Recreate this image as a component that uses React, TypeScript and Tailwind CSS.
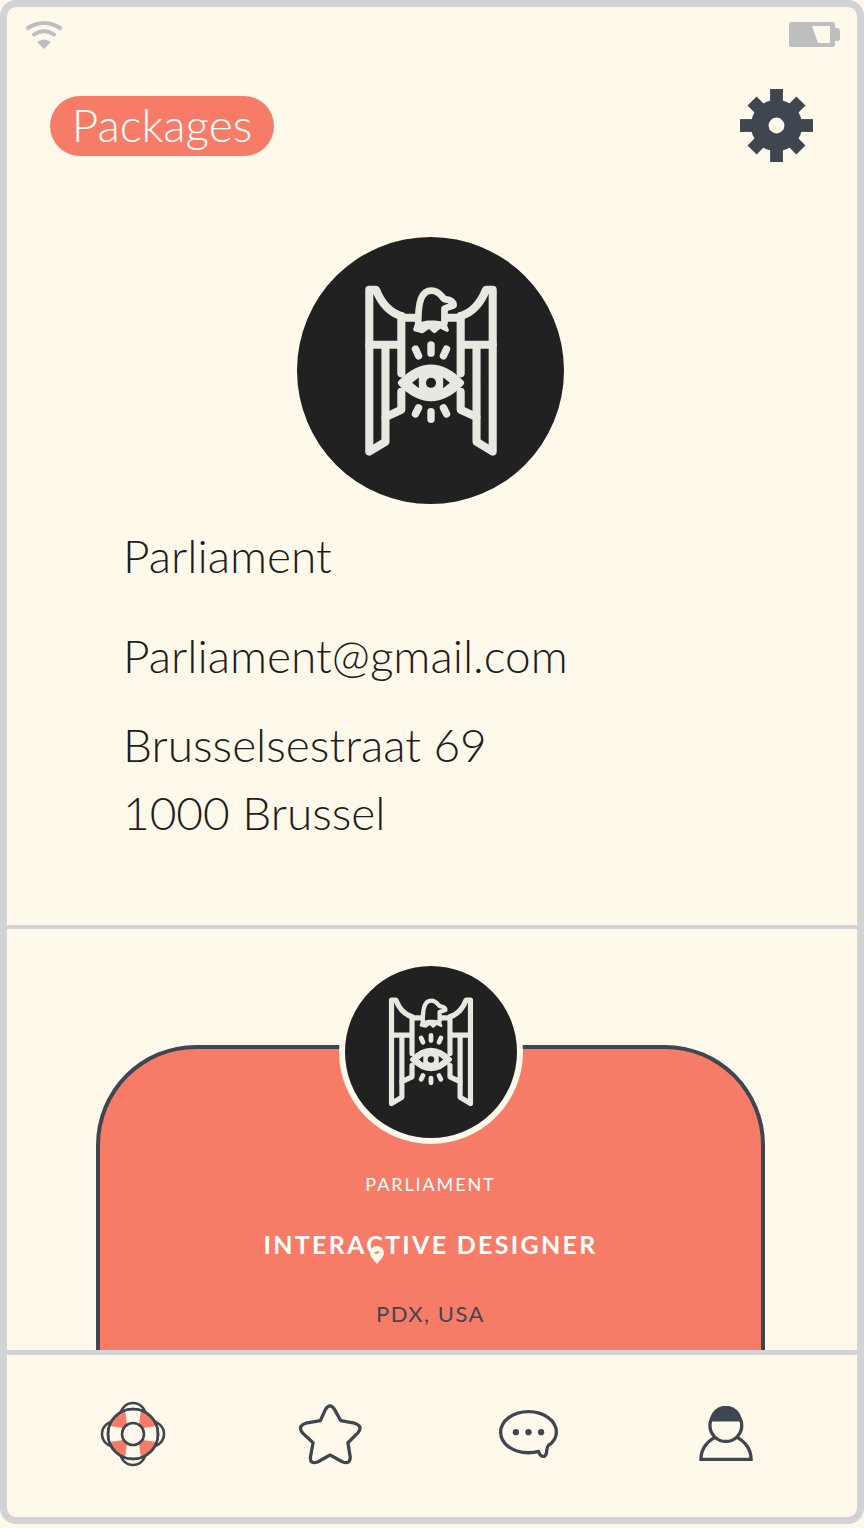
import React from "react"

const thin = { fontFamily: "Lato, sans-serif" }

function Emblem({ className }: { className: string }) {
  return (
    <svg viewBox="80 48 396 510" className={className} fill="none" stroke="#e8e8e0" strokeWidth="24" strokeLinejoin="round" strokeLinecap="round">
      {/* wings */}
      <path d="M190 140 Q140 125 115 62 H95 V542 L143 513 V440 L190 418 V365" />
      <path d="M366 140 Q416 125 441 62 H461 V542 L413 513 V440 L366 418 V365" />
      <path d="M190 140 V310 M366 140 V310 M95 225 H190 M366 225 H461 M143 225 V440 M413 225 V440 M190 145 H232 M322 145 H366" />
      {/* head */}
      <path d="M240 160 C240 95 250 65 280 65 C300 65 308 80 318 90 C335 92 345 98 345 108 L318 118 V160" strokeWidth="20" />
      <path d="M230 180 L236 162 H252 L268 158 L288 158 L318 162 L326 182 L305 172 L288 186 L272 172 L252 186 Z" fill="#e8e8e0" strokeWidth="10" />
      {/* rays */}
      <path d="M278 226 V250 M232 238 L241 258 M324 238 L315 258 M278 424 V446 M241 412 L232 430 M315 412 L324 430" strokeWidth="22" />
      {/* eye */}
      <path d="M190 338 Q278 250 366 338 Q278 426 190 338 Z" fill="#e8e8e0" strokeWidth="20" />
      <circle cx="278" cy="338" r="15" fill="#212121" stroke="none" />
      <path d="M242 322 L222 338 L242 354 Z M314 322 L334 338 L314 354 Z" fill="#212121" stroke="none" />
    </svg>
  )
}

function Wifi() {
  return (
    <svg viewBox="0 0 38 30" className="w-[38px] h-[30px]" fill="none" stroke="#bcbec0" strokeWidth="4">
      <path d="M1.5 9 Q19 -3 36.5 9" />
      <path d="M7.5 15.5 Q19 7 30.5 15.5" />
      <path d="M19 29 L12 22 Q19 17 26 22 Z" fill="#bcbec0" stroke="none" />
    </svg>
  )
}

function Battery() {
  return (
    <svg viewBox="0 0 51 25" className="w-[51px] h-[25px]">
      <rect x="0" y="0" width="46" height="25" rx="2" fill="#bcbec0" />
      <path d="M46 6 H48 Q51 6 51 9 V16 Q51 19 48 19 H46 Z" fill="#bcbec0" />
      <path d="M23 4 H41 V21 H29 Z" fill="#fff9ec" />
    </svg>
  )
}

function Gear() {
  return (
    <svg viewBox="-37 -37 74 74" className="w-[73px] h-[73px]">
      <circle r="26" fill="#3e4750" />
      {[0, 45, 90, 135, 180, 225, 270, 315].map((a) => (
        <rect key={a} x="-6.5" y={a % 90 === 0 ? -37 : -35} width="13" height="18" fill="#3e4750" transform={`rotate(${a})`} />
      ))}
      <circle r="8" fill="#fff9ec" />
    </svg>
  )
}

function Lifebuoy() {
  const stroke = "#3e4750"
  return (
    <svg viewBox="-33 -33 66 66" className="w-[66px] h-[66px]" stroke={stroke} strokeWidth="2.6">
      <circle cx="0" cy="-18.5" r="12.5" fill="#fff9ec" />
      <circle cx="0" cy="18.5" r="12.5" fill="#fff9ec" />
      <circle cx="-18.5" cy="0" r="12.5" fill="#fff9ec" />
      <circle cx="18.5" cy="0" r="12.5" fill="#fff9ec" />
      <circle r="25" fill="#f77c68" />
      <path d="M-6 -10 L-8 -23.5 H8 L6 -10 Z M-6 10 L-8 23.5 H8 L6 10 Z M-10 -6 L-23.5 -8 V8 L-10 6 Z M10 -6 L23.5 -8 V8 L10 6 Z" fill="#fff9ec" stroke="none" />
      <circle r="25" fill="none" />
      <circle r="11" fill="#fff9ec" />
    </svg>
  )
}

function StarIcon() {
  return (
    <svg viewBox="715 65 195 190" className="w-[65px] h-[63px]" fill="none" stroke="#3e4750" strokeWidth="10" strokeLinejoin="round">
      <path d="M782 118 L797 85 Q811 62 825 85 L843 118 L885 126 Q912 135 895 155 L865 185 L872 228 Q872 252 848 242 L811 222 L775 242 Q750 252 752 228 L760 185 L728 155 Q712 135 738 126 Z" />
    </svg>
  )
}

function Bubble() {
  return (
    <svg viewBox="80 80 190 155" className="w-[63px] h-[52px]" fill="none" stroke="#3e4750" strokeWidth="10" strokeLinejoin="round">
      <path d="M205 210 C195 213 185 214 175 214 C128 214 91 187 91 152 C91 117 128 90 175 90 C222 90 259 117 259 152 C259 168 250 182 235 192 C228 198 232 208 228 218 C224 228 215 226 210 220 Z" />
      <circle cx="137" cy="152" r="9.5" fill="#3e4750" stroke="none" />
      <circle cx="175" cy="152" r="9.5" fill="#3e4750" stroke="none" />
      <circle cx="213" cy="152" r="9.5" fill="#3e4750" stroke="none" />
    </svg>
  )
}

function Person() {
  return (
    <svg viewBox="680 75 175 170" className="w-[58px] h-[57px]" fill="none" stroke="#3e4750" strokeWidth="10">
      <path d="M692 235 C692 205 710 182 735 168 M843 235 C843 205 825 182 800 168 M687 235 H848" />
      <circle cx="767" cy="133" r="48" fill="#fff9ec" />
      <path d="M719 121 A48 48 0 0 1 815 121 Z" fill="#3e4750" stroke="none" />
    </svg>
  )
}

export default function App() {
  return (
    <div className="w-[864px] h-[1528px] bg-[#fff9ec]" style={thin}>
      <div className="h-[1524px] flex flex-col border-[7px] border-[#d1d3d4] rounded-[16px] overflow-hidden">
        <div className="h-[922px] shrink-0 flex flex-col border-b-[4px] border-[#d1d3d4]">
          <div className="flex justify-between items-start pl-[18px] pr-[17px] pt-[13px]">
            <Wifi />
            <div className="pt-[2px]"><Battery /></div>
          </div>
          <div className="flex justify-between items-center pl-[43px] pr-[44px] mt-[39px]">
            <div className="h-[60px] w-[224px] rounded-full bg-[#f77c68] text-white text-[46px] font-light flex items-center justify-center leading-none pb-[2px]">Packages</div>
            <Gear />
          </div>
          <div className="ml-[290px] mt-[75px] w-[267px] h-[267px] rounded-full bg-[#212121] flex items-center justify-center">
            <Emblem className="w-[134px] h-[172px]" />
          </div>
          <div className="pl-[116px] text-[46px] font-light text-[#1d1d1d] leading-[68px] mt-[18px]">
            <div>Parliament</div>
            <div className="mt-[32px]">Parliament@gmail.com</div>
            <div className="mt-[21px]">Brusselsestraat 69<br />1000 Brussel</div>
          </div>
        </div>
        <div className="h-[421px] shrink-0 relative overflow-hidden pl-[89px] pt-[116px]">
          <div className="w-[669px] h-[400px] bg-[#f77c68] border-[4px] border-b-0 border-[#3e4750] rounded-t-[100px] flex flex-col items-center text-center" >
            <div className="text-white text-[18px] tracking-[1.9px] mt-[123px] leading-[24px]">PARLIAMENT</div>
            <div className="text-white text-[25px] font-bold tracking-[2.3px] mt-[33px] leading-[30px]">INTERACTIVE DESIGNER</div>
            <div className="text-[#3e4750] text-[22px] tracking-[1.5px] mt-[41px] leading-[28px]">PDX, USA</div>
          </div>
          <div className="absolute top-[31px] left-[332px] w-[184px] h-[184px] rounded-full bg-[#212121] border-[6px] border-[#fff9ec] flex items-center justify-center box-border">
            <Emblem className="w-[86px] h-[110px]" />
          </div>
          <svg viewBox="0 0 16 20" className="absolute top-[316px] left-[362px] w-[16px] h-[20px]">
            <path d="M8 19 C5 15 1 12 1 8 A7 7 0 0 1 15 8 C15 12 11 15 8 19 Z" fill="#fff9ec" />
            <path d="M5 8 Q8 5 11 7 Q8 10 5 8 Z" fill="#f77c68" />
          </svg>
        </div>
        <div className="flex-1 border-t-[5px] border-[#d1d3d4] flex items-center pb-[4px]">
          <div className="w-[252px] flex justify-center"><Lifebuoy /></div>
          <div className="w-[142px] flex justify-center"><StarIcon /></div>
          <div className="w-[254px] flex justify-center"><Bubble /></div>
          <div className="w-[142px] flex justify-center"><Person /></div>
        </div>
      </div>
    </div>
  )
}
